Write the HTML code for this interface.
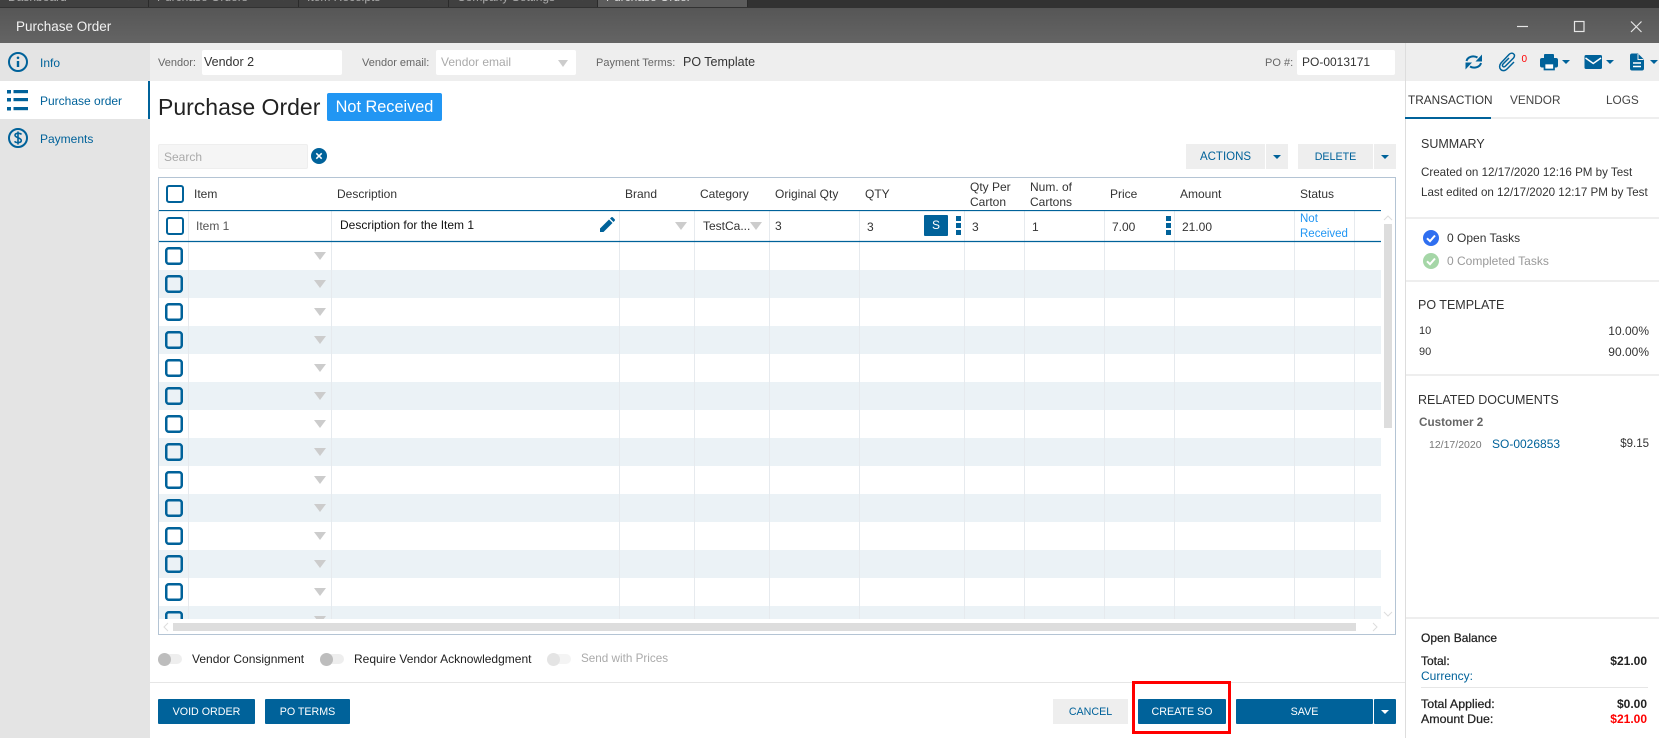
<!DOCTYPE html>
<html lang="en">
<head>
<meta charset="utf-8">
<title>Purchase Order</title>
<style>
html,body{margin:0;padding:0;width:1659px;height:738px;overflow:hidden;background:#fff;font-family:"Liberation Sans",Arial,sans-serif;}
#p{position:relative;width:1659px;height:738px;overflow:hidden;background:#fff;}
.a{position:absolute;}
.t{position:absolute;white-space:nowrap;line-height:16px;height:16px;font-size:12px;color:#333;}
.b{color:#00629a;}
.btn{position:absolute;background:#00629a;color:#fff;font-size:10.7px;text-align:center;line-height:26px;height:25px;border-radius:1px;}
.gbtn{position:absolute;background:#eee;color:#00629a;font-size:10.7px;text-align:center;line-height:26px;height:25px;}
.inp{position:absolute;background:#fff;height:25px;border-radius:2px;font-size:12.5px;line-height:25px;color:#333;}
.lbl{color:#666;font-size:11px;}
.caret{position:absolute;width:0;height:0;border-left:4px solid transparent;border-right:4px solid transparent;border-top:4px solid #00629a;}
.gc{position:absolute;width:0;height:0;border-left:6px solid transparent;border-right:6px solid transparent;border-top:8px solid #ccc;}
.hr{position:absolute;background:#eee;height:2px;}
.tab{position:absolute;top:0;height:7px;background:#404040;overflow:hidden;border-right:1px solid #2a2a2a;}
.tab span{position:absolute;left:8px;top:-10px;font-size:12px;line-height:14px;color:#aaa;white-space:nowrap;}
.tab i{position:absolute;right:12px;top:-10px;font-size:12px;line-height:14px;color:#999;font-style:normal;}
.tog{position:absolute;width:24px;height:10px;border-radius:5px;background:#eee;}
.tog:before{content:"";position:absolute;left:0;top:-1.5px;width:13px;height:13px;border-radius:50%;background:#bdbdbd;}
.tog.d{background:#f4f4f4;}
.tog.d:before{background:#e4e4e4;}
.cb{position:absolute;box-sizing:border-box;width:18px;height:18px;border:2.5px solid #00629a;border-radius:3px;background:#fff;}
.dots{position:absolute;width:5px;}
.dots i{display:block;width:5px;height:5px;background:#00629a;margin-bottom:2px;}
.sb{-webkit-text-stroke:.25px #222;color:#222;}
</style>
</head>
<body>
<div id="p">
<!-- top tabs -->
<div class="a" style="left:0;top:0;width:1659px;height:8px;background:#323232;"></div>
<div class="tab" style="left:0;width:148px;"><span>Dashboard</span><i>✕</i></div>
<div class="tab" style="left:149px;width:149px;"><span>Purchase Orders</span><i>✕</i></div>
<div class="tab" style="left:299px;width:149px;"><span>Item Receipts</span><i>✕</i></div>
<div class="tab" style="left:449px;width:148px;"><span>Company Settings</span><i>✕</i></div>
<div class="tab" style="left:598px;width:149px;background:#5c5c5c;"><span style="color:#ddd;">Purchase Order</span><i>✕</i></div>
<!-- title bar -->
<div class="a" style="left:0;top:8px;width:1659px;height:35px;background:linear-gradient(#565656,#646464);"></div>
<div class="t" style="left:16px;top:19px;font-size:13.5px;color:#f2f2f2;">Purchase Order</div>
<svg class="a" style="left:1510px;top:15px;" width="149" height="24" fill="none" stroke="#e6e6e6" stroke-width="1.2"><path d="M7 11.5H18"/><rect x="64.5" y="6.5" width="9.5" height="10"/><path d="M121 6.5L131.500 17M131.500 6.500L121 17"/></svg>
<!-- sidebar -->
<div class="a" style="left:0;top:43px;width:150px;height:695px;background:#e4e4e4;"></div>
<div class="a" style="left:0;top:81px;width:150px;height:38px;background:#fff;"></div>
<div class="a" style="left:148px;top:81px;width:2px;height:38px;background:#00629a;"></div>
<svg class="a" style="left:6.500px;top:51px;" width="22" height="22" fill="none" stroke="#00629a" stroke-width="2"><circle cx="11" cy="11" r="9"/><path d="M11 10V16" stroke-width="2.400"/><circle cx="11" cy="6.800" r="1.300" fill="#00629a" stroke="none"/></svg>
<svg class="a" style="left:6px;top:88px;" width="23" height="24" fill="#00629a"><rect x="1" y="2" width="4" height="3.500"/><rect x="7.500" y="2" width="14.500" height="3.200"/><rect x="1" y="10" width="4" height="3.500"/><rect x="7.500" y="10" width="14.500" height="3.200"/><rect x="1" y="19" width="4" height="3.500"/><rect x="7.500" y="19" width="14.500" height="3.200"/></svg>
<svg class="a" style="left:6.500px;top:127px;" width="22" height="22" fill="none" stroke="#00629a" stroke-width="2"><circle cx="11" cy="11" r="9"/><path d="M14.500 7.500C13.500 6 8 5.500 8 8.300C8 11 14.300 10.500 14.300 13.500C14.300 16.300 8.700 16 7.600 14.300M11 4.500V17.500" stroke-width="1.600"/></svg>
<div class="t b" style="left:40px;top:55px;font-size:12px;">Info</div>
<div class="t b" style="left:40px;top:93px;font-size:12px;">Purchase order</div>
<div class="t b" style="left:40px;top:131px;font-size:12px;">Payments</div>
<!-- vendor bar -->
<div class="a" style="left:150px;top:43px;width:1509px;height:38px;background:#eee;"></div>
<div class="t lbl" style="left:158px;top:55px;">Vendor:</div>
<div class="inp" style="left:202px;top:50px;width:140px;"><span style="margin-left:2px;">Vendor 2</span></div>
<div class="t lbl" style="left:362px;top:55px;">Vendor email:</div>
<div class="inp" style="left:436px;top:50px;width:140px;color:#aaa;font-size:12px;"><span style="margin-left:5px;">Vendor email</span></div>
<div class="gc" style="left:558px;top:60px;border-left-width:5px;border-right-width:5px;border-top-width:7px;"></div>
<div class="t lbl" style="left:596px;top:55px;">Payment Terms:</div>
<div class="t" style="left:683px;top:54px;font-size:12.500px;">PO Template</div>
<div class="t lbl" style="left:1265px;top:55px;">PO #:</div>
<div class="inp" style="left:1297px;top:50px;width:98px;"><span style="margin-left:5px;font-size:12px;">PO-0013171</span></div>
<div class="a" style="left:1405px;top:43px;width:1px;height:695px;background:#ddd;"></div>
<!-- toolbar icons -->
<svg class="a" style="left:1450px;top:44px;" width="209" height="36">
 <g fill="none" stroke="#00629a" stroke-width="2">
  <path d="M16.500 17C17.500 13 23 11 27.500 13.500"/>
  <path d="M31 19C30 23 24.500 25 20 22.500"/>
 </g>
 <path d="M32 10.500V17.500H25.500Z M15.500 25.500V18.500H22Z" fill="#00629a"/>
 <path d="M59 14L53 20C51.500 22 53.500 24 55.500 22L63.500 14C66.500 10.500 62 7.500 59 10.500L51 19C47 24 52.500 29.500 57 25L64 18" fill="none" stroke="#00629a" stroke-width="1.500"/>
 <g fill="#00629a"><rect x="94" y="10" width="10" height="5" rx="1"/><rect x="90" y="14" width="18" height="9.500" rx="2"/></g>
 <rect x="94.500" y="19.500" width="9.500" height="6" fill="#fff" stroke="#00629a" stroke-width="1.700"/>
 <rect x="134.500" y="11" width="17.500" height="14" rx="1.500" fill="#00629a"/><path d="M135.500 14L143.250 19.500L151 14" fill="none" stroke="#fff" stroke-width="1.500"/>
 <path d="M182 9.500H188L194 15.500V24.500C194 25.700 193.200 26.500 192 26.500H182C180.800 26.500 180 25.700 180 24.500V11.500C180 10.300 180.800 9.500 182 9.500Z" fill="#00629a"/>
 <path d="M183 19H191M183 22.500H191" stroke="#fff" stroke-width="1.500"/>
 <path d="M188 10V15.500H193.500" fill="none" stroke="#eee" stroke-width="1"/>
</svg>
<div class="t" style="left:1521.500px;top:52px;color:#f00;font-size:10px;">0</div>
<div class="caret" style="left:1562px;top:60px;"></div>
<div class="caret" style="left:1606px;top:60px;"></div>
<div class="caret" style="left:1650px;top:60px;"></div>
<!-- heading -->
<div class="t" style="left:158px;top:94px;font-size:23px;line-height:26px;height:26px;color:#222;">Purchase Order</div>
<div class="a" style="left:327px;top:92.500px;width:115px;height:28px;background:#2196f3;border-radius:2px;color:#fff;font-size:16.300px;line-height:28px;text-align:center;">Not Received</div>
<!-- search -->
<div class="a" style="left:158px;top:144px;width:150px;height:25px;background:#f5f5f5;border-radius:2px;box-sizing:border-box;border:1px solid #eee;color:#aaa;font-size:12px;line-height:25px;padding-left:5px;">Search</div>
<svg class="a" style="left:311px;top:148px;" width="16" height="16"><circle cx="8" cy="8" r="8" fill="#00629a"/><path d="M5.300 5.300L10.700 10.700M10.700 5.300L5.300 10.700" stroke="#fff" stroke-width="1.500"/></svg>
<!-- actions -->
<div class="gbtn" style="left:1186px;top:144px;width:79px;font-size:11.500px;">ACTIONS</div>
<div class="gbtn" style="left:1266px;top:144px;width:22px;"></div>
<div class="caret" style="left:1273px;top:155px;"></div>
<div class="gbtn" style="left:1298px;top:144px;width:75px;">DELETE</div>
<div class="gbtn" style="left:1374px;top:144px;width:22px;"></div>
<div class="caret" style="left:1381px;top:155px;"></div>
<!-- table -->
<div class="a" style="left:158px;top:177px;width:1238px;height:458px;box-sizing:border-box;border:1px solid #b4c4d4;background:#fff;"></div>
<svg class="a" style="left:159px;top:210px;" width="1222" height="409">
 <defs>
  <pattern id="r" x="0" y="32" width="1222" height="56" patternUnits="userSpaceOnUse">
   <rect x="0" y="28" width="1222" height="28" fill="#ebf2f6"/>
   <rect x="7.250" y="6.250" width="15.500" height="15.500" rx="2.500" fill="#fff" stroke="#00629a" stroke-width="2.500"/>
   <rect x="7.250" y="34.250" width="15.500" height="15.500" rx="2.500" fill="#ebf2f6" stroke="#00629a" stroke-width="2.500"/>
   <path d="M155 10H167L161 18Z M155 38H167L161 46Z" fill="#ccc"/>
  </pattern>
 </defs>
 <rect x="0" y="32" width="1222" height="377" fill="url(#r)"/>
 <g stroke="#e6eaee" stroke-width="1">
  <path d="M29.500 0V409M172.500 0V409M460.500 0V409M535.500 0V409M610.500 0V409M700.500 0V409M805.500 0V409M865.500 0V409M945.500 0V409M1015.500 0V409M1135.500 0V409M1195.500 0V409"/>
 </g>
 <path d="M0 .5H1222M0 31.500H1222" stroke="#00629a" stroke-width="1.200"/>
</svg>
<div class="cb" style="left:165.500px;top:185px;"></div>
<div class="cb" style="left:165.500px;top:217px;"></div>
<!-- header -->
<div class="t" style="left:194px;top:186px;">Item</div>
<div class="t" style="left:337px;top:186px;">Description</div>
<div class="t" style="left:625px;top:186px;">Brand</div>
<div class="t" style="left:700px;top:186px;">Category</div>
<div class="t" style="left:775px;top:186px;">Original Qty</div>
<div class="t" style="left:865px;top:186px;">QTY</div>
<div class="t" style="left:970px;top:180px;line-height:15px;height:30px;">Qty Per<br>Carton</div>
<div class="t" style="left:1030px;top:180px;line-height:15px;height:30px;">Num. of<br>Cartons</div>
<div class="t" style="left:1110px;top:186px;">Price</div>
<div class="t" style="left:1180px;top:186px;">Amount</div>
<div class="t" style="left:1300px;top:186px;">Status</div>
<!-- row 1 -->
<div class="t" style="left:196px;top:218px;color:#555;">Item 1</div>
<div class="t" style="left:340px;top:217px;color:#111;">Description for the Item 1</div>
<svg class="a" style="left:599px;top:217px;" width="16" height="16" fill="#00629a"><path d="M1 11.500L10 2.500L13.500 6L4.500 15H1Z"/><path d="M11 1.500L12.300.3C12.800-.1 13.300-.1 13.700.3L15.700 2.300C16.100 2.700 16.100 3.300 15.700 3.700L14.500 5Z"/></svg>
<div class="gc" style="left:675px;top:222px;"></div>
<div class="t" style="left:703px;top:218px;">TestCa...</div>
<div class="gc" style="left:750px;top:222px;"></div>
<div class="t" style="left:775px;top:218px;">3</div>
<div class="t" style="left:867px;top:219px;">3</div>
<div class="btn" style="left:924px;top:215px;width:24px;height:21px;line-height:21px;font-size:12px;">S</div>
<div class="dots" style="left:955.500px;top:216px;"><i></i><i></i><i></i></div>
<div class="t" style="left:972px;top:219px;">3</div>
<div class="t" style="left:1032px;top:219px;">1</div>
<div class="t" style="left:1112px;top:219px;">7.00</div>
<div class="dots" style="left:1165.500px;top:216px;"><i></i><i></i><i></i></div>
<div class="t" style="left:1182px;top:219px;">21.00</div>
<div class="t" style="left:1300px;top:212px;color:#2196f3;line-height:15px;height:30px;font-size:11.500px;">Not<br>Received</div>
<!-- scrollbars -->
<div class="a" style="left:1384px;top:224px;width:8px;height:204px;background:#ddd;"></div>
<svg class="a" style="left:1382px;top:212px;" width="12" height="412" fill="none" stroke="#ddd" stroke-width="1"><path d="M2 8L6 4L10 8M2 400L6 404L10 400"/></svg>
<div class="a" style="left:173px;top:623px;width:1183px;height:8px;background:#ddd;"></div>
<svg class="a" style="left:162px;top:622px;" width="1220" height="10" fill="none" stroke="#ddd"><path d="M6 1L2 5L6 9M1211 1L1215 5L1211 9"/></svg>
<!-- toggles -->
<div class="tog" style="left:158px;top:654px;"></div>
<div class="t" style="left:192px;top:651px;color:#222;">Vendor Consignment</div>
<div class="tog" style="left:320px;top:654px;"></div>
<div class="t" style="left:354px;top:651px;color:#222;">Require Vendor Acknowledgment</div>
<div class="tog d" style="left:547px;top:654px;"></div>
<div class="t" style="left:581px;top:651px;color:#aaa;font-size:11.700px;">Send with Prices</div>
<!-- footer -->
<div class="a" style="left:150px;top:682px;width:1255px;height:1px;background:#e6e6e6;"></div>
<div class="btn" style="left:158px;top:699px;width:97px;">VOID ORDER</div>
<div class="btn" style="left:265px;top:699px;width:85px;">PO TERMS</div>
<div class="gbtn" style="left:1053px;top:699px;width:75px;">CANCEL</div>
<div class="btn" style="left:1138px;top:699px;width:88px;">CREATE SO</div>
<div class="a" style="left:1132px;top:681px;width:99px;height:53px;box-sizing:border-box;border:3px solid #f00;"></div>
<div class="btn" style="left:1236px;top:699px;width:137px;">SAVE</div>
<div class="btn" style="left:1374px;top:699px;width:22px;"></div>
<div class="caret" style="left:1381px;top:710px;border-top-color:#fff;"></div>
<!-- right panel -->
<div class="t" style="left:1408px;top:92px;font-size:11.800px;color:#333;">TRANSACTION</div>
<div class="t" style="left:1510px;top:92px;font-size:11.800px;color:#444;">VENDOR</div>
<div class="t" style="left:1606px;top:92px;font-size:11.800px;color:#444;">LOGS</div>
<div class="a" style="left:1406px;top:117px;width:253px;height:2px;background:#eee;"></div>
<div class="a" style="left:1405px;top:117px;width:86px;height:2px;background:#00629a;"></div>
<div class="t" style="left:1421px;top:136px;font-size:12.500px;">SUMMARY</div>
<div class="t" style="left:1421px;top:165px;font-size:11.600px;">Created on 12/17/2020 12:16 PM by Test</div>
<div class="t" style="left:1421px;top:185px;font-size:11.600px;">Last edited on 12/17/2020 12:17 PM by Test</div>
<div class="hr" style="left:1406px;top:217px;width:253px;"></div>
<svg class="a" style="left:1423px;top:230px;" width="16" height="40"><circle cx="8" cy="8" r="8" fill="#2f6ff0"/><path d="M4 8.300L7 11.200L12 5.500" fill="none" stroke="#fff" stroke-width="2"/><circle cx="8" cy="31" r="8" fill="#a5d6a7"/><path d="M4 31.300L7 34.200L12 28.500" fill="none" stroke="#fff" stroke-width="2"/></svg>
<div class="t" style="left:1447px;top:230px;font-size:12px;">0 Open Tasks</div>
<div class="t" style="left:1447px;top:253px;font-size:12px;color:#999;">0 Completed Tasks</div>
<div class="hr" style="left:1406px;top:280px;width:253px;"></div>
<div class="t" style="left:1418px;top:297px;font-size:12.500px;">PO TEMPLATE</div>
<div class="t" style="left:1419px;top:323px;font-size:11px;">10</div>
<div class="t" style="right:10px;top:323px;font-size:12px;">10.00%</div>
<div class="t" style="left:1419px;top:344px;font-size:11px;">90</div>
<div class="t" style="right:10px;top:344px;font-size:12px;">90.00%</div>
<div class="hr" style="left:1406px;top:374px;width:253px;"></div>
<div class="t" style="left:1418px;top:392px;font-size:12.500px;">RELATED DOCUMENTS</div>
<div class="t" style="left:1419px;top:415px;font-size:11.700px;font-weight:bold;color:#666;">Customer 2</div>
<div class="t" style="left:1429px;top:437px;font-size:10.500px;color:#777;">12/17/2020</div>
<div class="t b" style="left:1492px;top:436px;font-size:12px;">SO-0026853</div>
<div class="t" style="right:10px;top:436px;font-size:11.500px;">$9.15</div>
<div class="hr" style="left:1406px;top:617px;width:253px;"></div>
<div class="t sb" style="left:1421px;top:630px;font-size:12px;">Open Balance</div>
<div class="t sb" style="left:1421px;top:653px;font-size:12px;">Total:</div>
<div class="t" style="right:12px;top:653px;font-size:12px;font-weight:bold;color:#222;">$21.00</div>
<div class="t b" style="left:1421px;top:668px;font-size:12px;">Currency:</div>
<div class="a" style="left:1421px;top:687px;width:227px;height:1px;background:#e6e6e6;"></div>
<div class="t sb" style="left:1421px;top:696px;font-size:12.400px;">Total Applied:</div>
<div class="t" style="right:12px;top:696px;font-size:12px;font-weight:bold;color:#222;">$0.00</div>
<div class="t sb" style="left:1421px;top:711px;font-size:12.400px;">Amount Due:</div>
<div class="t" style="right:12px;top:711px;font-size:12px;font-weight:bold;color:#f00;">$21.00</div>
</div>
</body>
</html>
